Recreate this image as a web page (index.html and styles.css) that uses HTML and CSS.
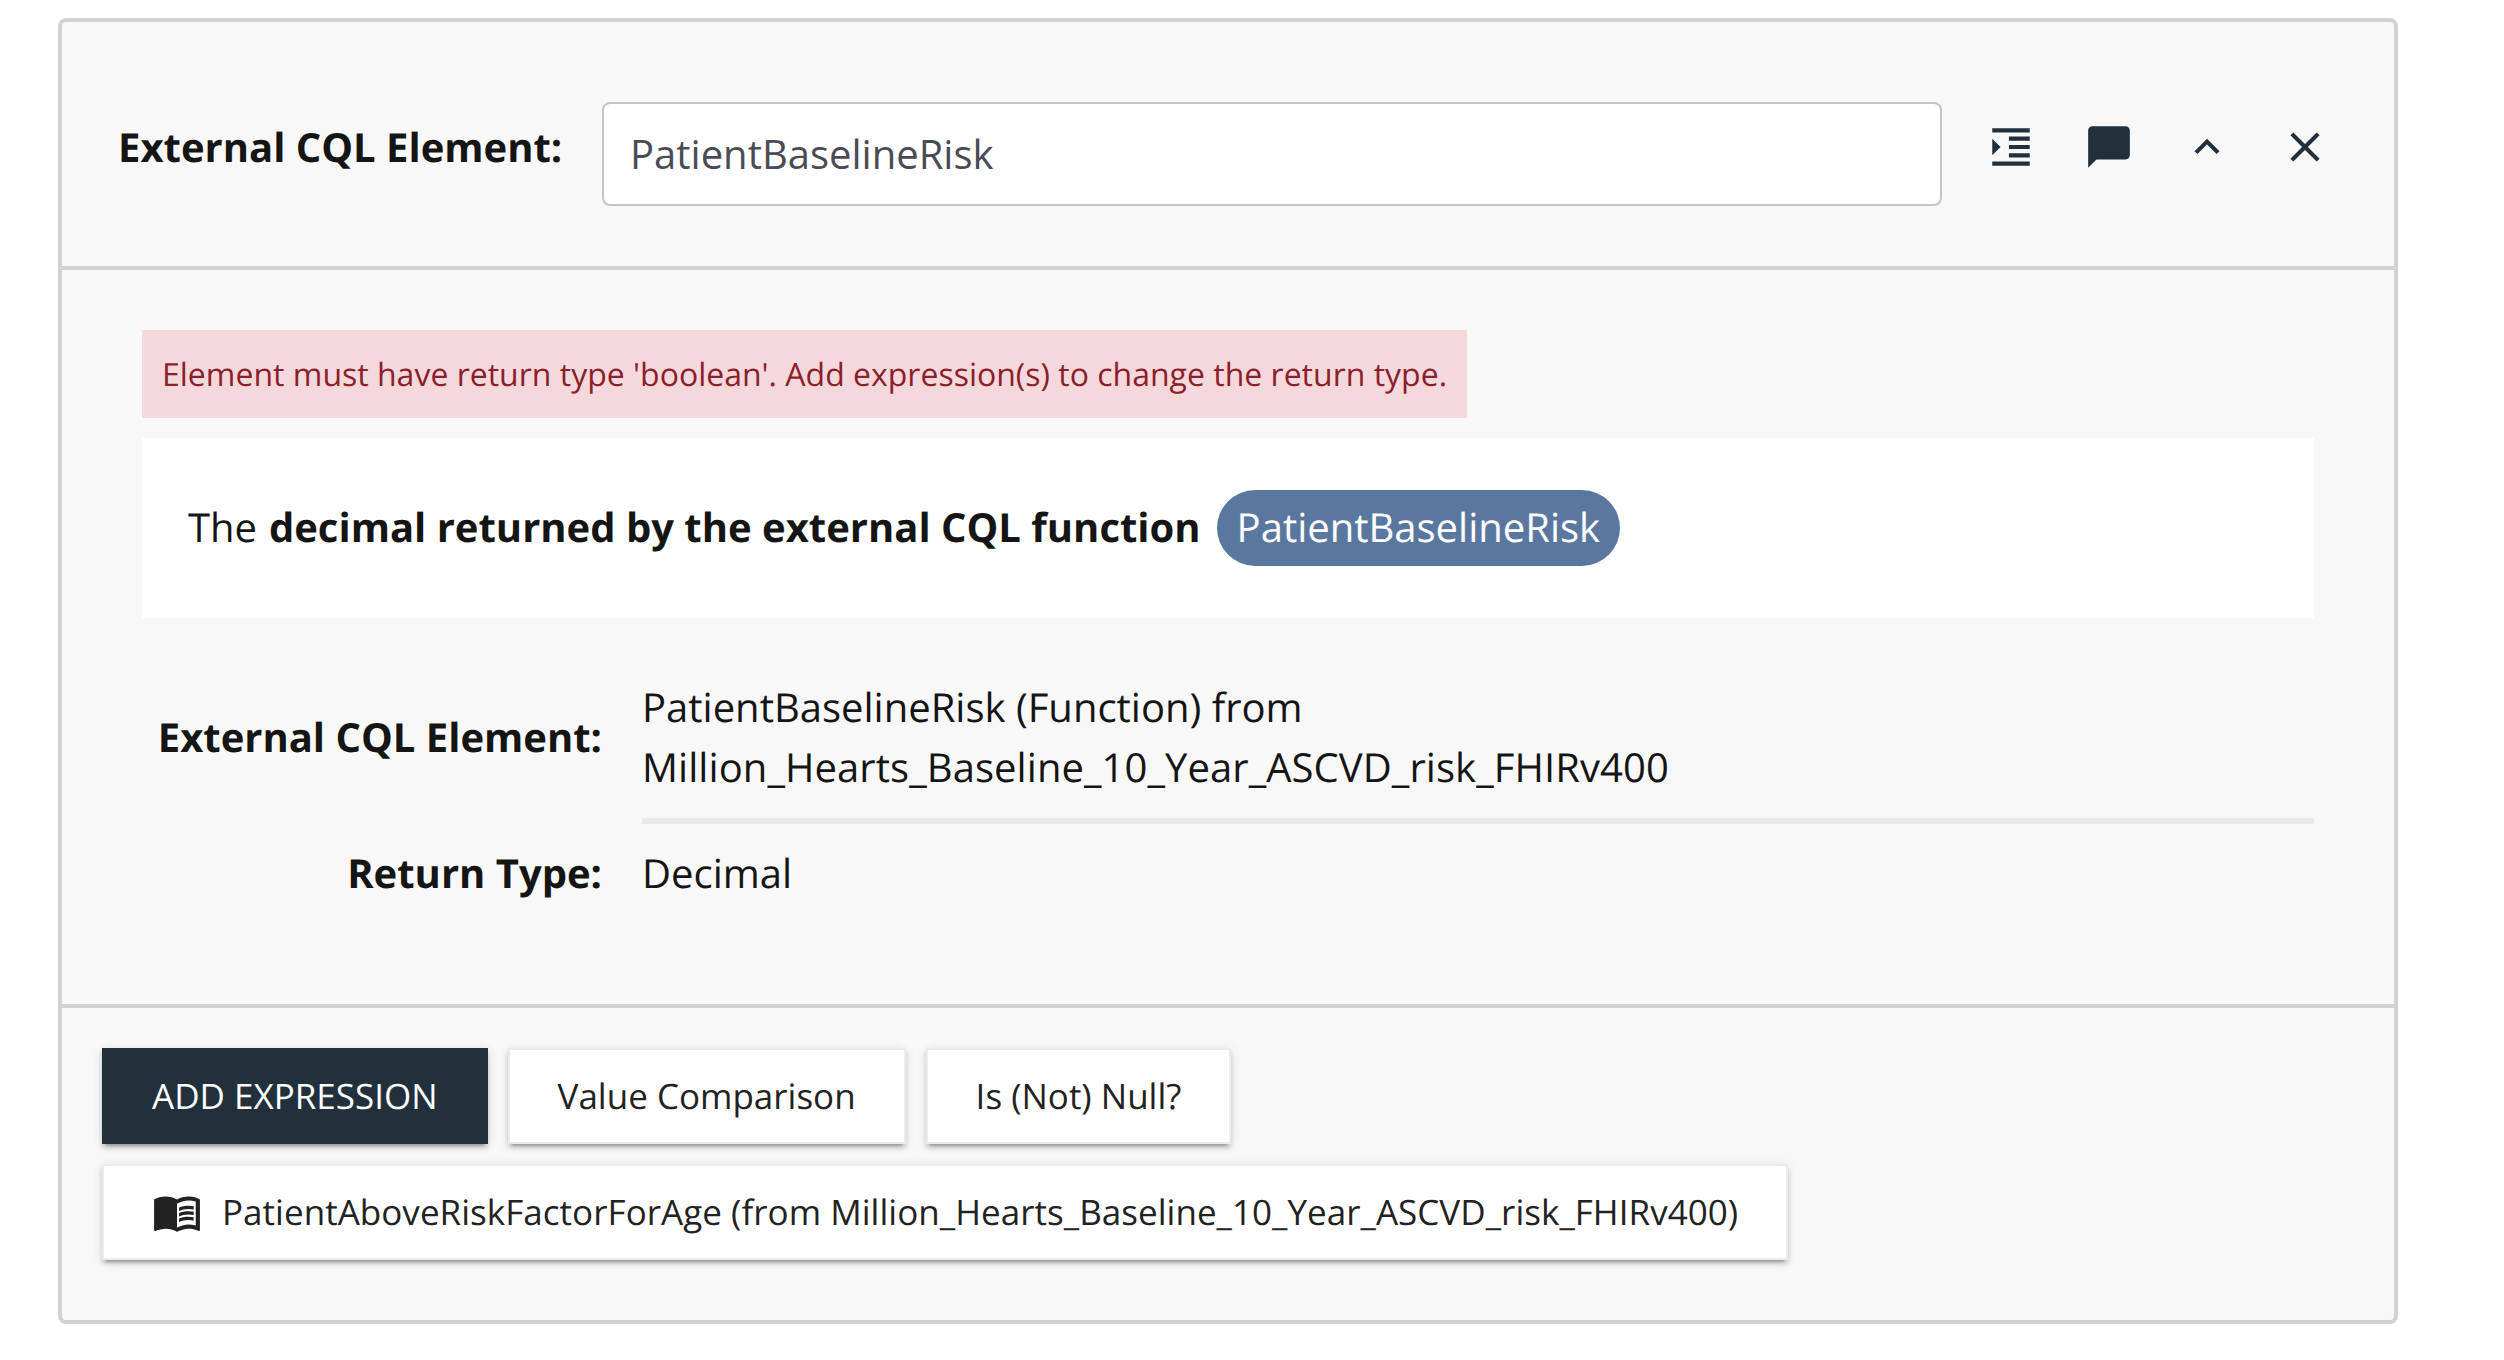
FILE: index.html
```html
<!DOCTYPE html>
<html lang="en">
<head>
<meta charset="utf-8">
<title>External CQL Element</title>
<link rel="stylesheet" href="styles.css">
</head>
<body>
<section class="card">
  <header class="card-header">
    <label class="element-label" for="element-name">External CQL Element:</label>
    <input class="element-input" id="element-name" type="text" value="PatientBaselineRisk">
    <div class="actions">
      <button class="icon-button" aria-label="indent"><svg class="icon" viewBox="0 0 24 24"><path d="M3 21h18v-2H3v2zM3 8v8l4-4-4-4zm8 9h10v-2H11v2zM3 3v2h18V3H3zm8 6h10V7H11v2zm0 4h10v-2H11v2z"/></svg></button>
      <button class="icon-button" aria-label="comment"><svg class="icon" viewBox="0 0 24 24"><path d="M20 2H4c-1.100 0-2 .9-2 2v18l4-4h14c1.100 0 2-.9 2-2V4c0-1.100-.9-2-2-2z"/></svg></button>
      <button class="icon-button" aria-label="collapse"><svg class="icon" viewBox="0 0 24 24"><path d="M12 8l-6 6 1.410 1.410L12 10.830l4.590 4.580L18 14z"/></svg></button>
      <button class="icon-button" aria-label="close"><svg class="icon" viewBox="0 0 24 24"><path d="M19 6.410L17.590 5 12 10.590 6.410 5 5 6.410 10.590 12 5 17.590 6.410 19 12 13.410 17.590 19 19 17.590 13.410 12z"/></svg></button>
    </div>
  </header>
  <div class="card-body">
    <div class="alert">Element must have return type 'boolean'. Add expression(s) to change the return type.</div>
    <div class="phrase">The&nbsp;<strong class="phrase-bold">decimal returned by the external CQL function</strong><span class="pill">PatientBaselineRisk</span></div>
    <dl class="details">
      <dt class="term term-tall">External CQL Element:</dt>
      <dd class="value value-lined">PatientBaselineRisk (Function) from<br><span class="library">Million_Hearts_Baseline_10_Year_ASCVD_risk_FHIRv400</span></dd>
      <dt class="term">Return Type:</dt>
      <dd class="value">Decimal</dd>
    </dl>
  </div>
  <footer class="card-footer">
    <button class="button button-primary">ADD EXPRESSION</button>
    <button class="button">Value Comparison</button>
    <button class="button">Is (Not) Null?</button>
    <button class="button button-book"><svg class="icon" viewBox="0 0 24 24"><path d="M21 5c-1.110-.35-2.330-.5-3.500-.5-1.950 0-4.050.4-5.500 1.500-1.450-1.100-3.550-1.500-5.500-1.500S2.450 4.900 1 6v14.650c0 .25.25.5.5.5.1 0 .15-.05.25-.05C3.100 20.450 5.050 20 6.500 20c1.950 0 4.050.4 5.500 1.500 1.350-.85 3.800-1.500 5.500-1.500 1.650 0 3.350.3 4.750 1.050.1.050.15.050.25.050.25 0 .5-.25.5-.5V6c-.6-.45-1.250-.75-2-1zm0 13.500c-1.100-.35-2.300-.5-3.500-.5-1.700 0-4.150.65-5.500 1.500V8c1.350-.85 3.800-1.500 5.500-1.500 1.200 0 2.400.15 3.500.5v11.500z"/><path d="M17.500 10.500c.88 0 1.730.09 2.500.26V9.240c-.79-.15-1.640-.24-2.500-.24-1.700 0-3.240.29-4.500.83v1.660c1.130-.64 2.700-.99 4.500-.99zM13 12.490v1.660c1.130-.64 2.700-.99 4.500-.99.88 0 1.730.09 2.500.26V11.900c-.79-.15-1.640-.24-2.500-.24-1.700 0-3.240.3-4.500.83zM17.500 14.330c-1.700 0-3.240.29-4.500.83v1.660c1.130-.64 2.700-.99 4.500-.99.88 0 1.730.09 2.500.26v-1.520c-.79-.16-1.640-.24-2.500-.24z"/></svg><span class="book-text">PatientAboveRiskFactorForAge (from Million_Hearts_Baseline_10_Year_ASCVD_risk_FHIRv400)</span></button>
  </footer>
</section>
</body>
</html>
```
FILE: styles.css
```css
* { box-sizing: border-box; }

body {
  margin: 0;
  padding: 18px 106px 36px 58px;
  background: #fff;
  color: #151515;
  font: 40px/60px "Open Sans", "Noto Sans", sans-serif;
  text-rendering: geometricPrecision;
}

.card {
  background: #f8f8f8;
  border: 4px solid #d2d2d2;
  border-radius: 8px;
}

.card-header {
  display: flex;
  align-items: center;
  height: 248px;
  padding: 0 32px 0 56px;
  border-bottom: 4px solid #d2d2d2;
}

.element-label {
  width: 484px;
  margin-top: 6px;
  font-weight: 700;
}

.element-input {
  width: 1340px;
  height: 104px;
  margin-top: 20px;
  padding: 0 26px 2px;
  border: 2px solid #c4c4c4;
  border-radius: 8px;
  background: #fff;
  color: #494c54;
  font: inherit;
}

.actions {
  display: flex;
  margin: 6px 0 0 20px;
}

.icon-button {
  display: flex;
  padding: 24px;
  border: 0;
  background: none;
  color: #22303b;
}

.icon {
  flex: none;
  width: 50px;
  height: 50px;
  fill: currentColor;
}

.card-body {
  height: 738px;
  padding: 60px 80px 0;
  border-bottom: 4px solid #d2d2d2;
}

.alert {
  width: max-content;
  height: 88px;
  padding: 21px 20px 19px;
  background: #f5d8dc;
  color: #8b1f2b;
  font-size: 32px;
  line-height: 48px;
}

.phrase {
  display: flex;
  align-items: center;
  height: 180px;
  margin-top: 20px;
  padding: 0 46px 2px;
  background: #fff;
}

.phrase-bold { margin-left: 1.5px; }

.pill {
  height: 76px;
  margin: 2px 0 0 16px;
  padding: 7px 20px;
  border-radius: 38px;
  background: #5a789f;
  color: #fff;
}

.details {
  display: grid;
  grid-template-columns: 460px 1fr;
  column-gap: 40px;
  align-items: center;
  margin: 59px 0 0;
}

.term {
  padding-bottom: 2px;
  font-weight: 700;
  text-align: right;
}

.term-tall { padding-bottom: 27px; }

.value {
  margin: 0;
  padding: 19px 0 21px;
}

.value-lined {
  padding: 0 0 21px;
  border-bottom: 6px solid #e8ebee;
}

.library { letter-spacing: .06px; }

.card-footer {
  display: flex;
  flex-wrap: wrap;
  align-content: flex-start;
  gap: 20px;
  height: 312px;
  padding: 40px;
}

.button {
  display: flex;
  align-items: center;
  height: 96px;
  padding: 2px 48px 0;
  border: 2px solid #eaeaef;
  background: #fff;
  box-shadow: 0 6px 2px -4px rgba(0, 0, 0, .2), 0 4px 4px rgba(0, 0, 0, .14), 0 2px 10px rgba(0, 0, 0, .12);
  color: #222;
  font: 35px/54px "Open Sans", "Noto Sans", sans-serif;
  text-rendering: inherit;
}

.button-primary {
  border-color: #22303b;
  background: #22303b;
  color: #fff;
}

.button-book {
  gap: 20px;
  padding-top: 0;
}

.book-text {
  padding-top: 2px;
  letter-spacing: .035px;
}
```
